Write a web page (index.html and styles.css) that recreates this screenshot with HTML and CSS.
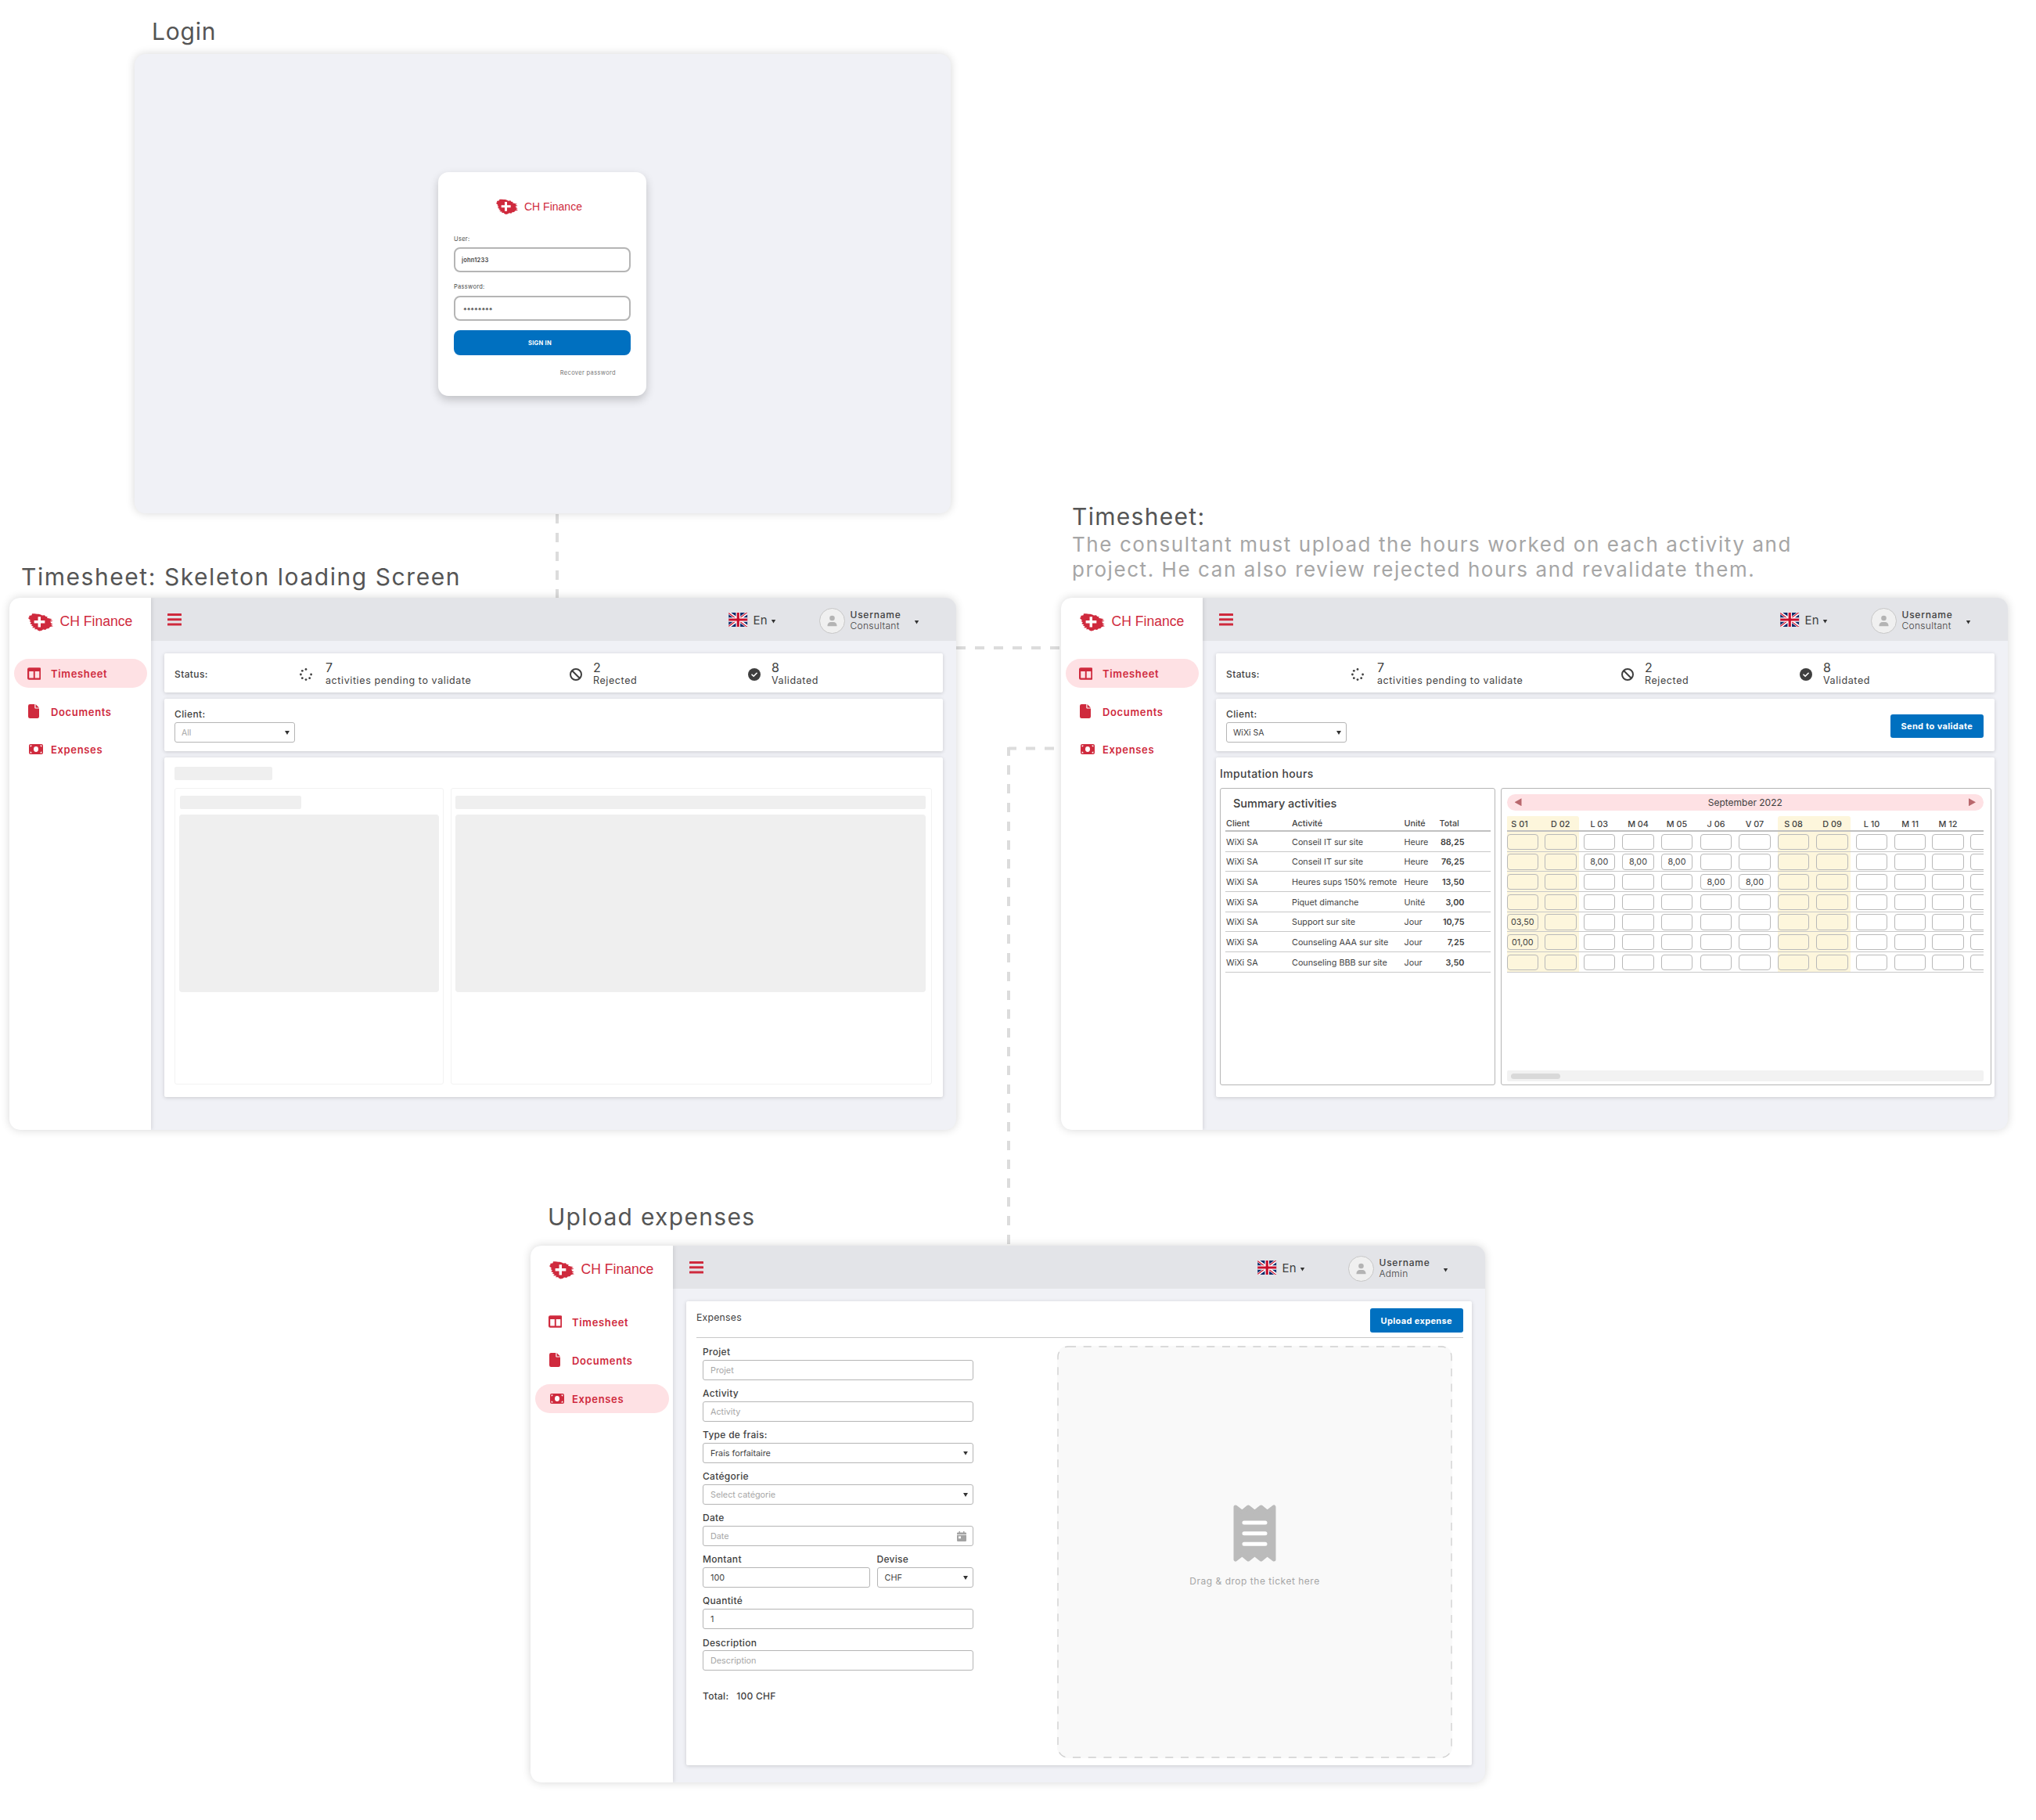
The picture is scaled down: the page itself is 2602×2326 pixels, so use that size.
FILE: index.html
```html
<!DOCTYPE html>
<html lang="en">

<head>
    <meta charset="UTF-8">
    <meta name="viewport" content="width=device-width, initial-scale=1.0">
    <title>CH Finance - Screens</title>
    <link rel="stylesheet" href="styles.css">
</head>

<body>

    <!-- Shared icons -->
    <svg class="sprite" aria-hidden="true">
        <symbol id="i-logo" viewBox="0 0 84 60">
            <path fill="#cf2a3d" d="M0 17l4-4-1-4 9-2 1-5 8 0 9 1 5 0 7 2 5 3 8-1 3 4 7 1-2 4 18 4-7 3 9 4-9 2 3 5 6 3-7 2 8 5-9 2-5 3 1 2-9 1-4 4-8-1-4 3-8 2-7-3-1-3-9 0 3-4-11-1 5-4-8-3 4-3-8-4 4-4-6-4 4-2z" />
            <path fill="#fff" d="M33 12h9v13h14v9H42v13h-9V34H20v-9h13z" />
        </symbol>
        <symbol id="i-table" viewBox="0 0 18 16">
            <path fill="#cf2a3d" fill-rule="evenodd" d="M2.200 0h13.600A2.200 2.200 0 0 1 18 2.200v11.600a2.200 2.200 0 0 1-2.200 2.200H2.200A2.200 2.200 0 0 1 0 13.800V2.200A2.200 2.200 0 0 1 2.200 0zM2.300 5v8.700H8V5zM10 5v8.700h5.700V5z" />
        </symbol>
        <symbol id="i-file" viewBox="0 0 14 18">
            <path fill="#cf2a3d" d="M2.200 0H8.300v4.300c0 .8.500 1.300 1.300 1.300H14v10.200A2.200 2.200 0 0 1 11.800 18H2.200A2.200 2.200 0 0 1 0 15.800V2.200A2.200 2.200 0 0 1 2.200 0zM9.500 0L14 4.500H9.500z" />
        </symbol>
        <symbol id="i-money" viewBox="0 0 18 13">
            <rect width="18" height="13" rx="2" fill="#cf2a3d" />
            <ellipse cx="9" cy="6.500" rx="3" ry="3.400" fill="#fff" />
            <path fill="#fff" d="M1.600 3.600V1.600h2a2 2 0 0 1-2 2zM16.400 3.600V1.600h-2a2 2 0 0 0 2 2zM1.600 9.400v2h2a2 2 0 0 0-2-2zM16.400 9.400v2h-2a2 2 0 0 1 2-2z" />
        </symbol>
        <symbol id="i-burger" viewBox="0 0 18 16">
            <g fill="#cf2a3d">
                <rect width="18" height="3" rx=".5" />
                <rect y="6.300" width="18" height="3" rx=".5" />
                <rect y="12.600" width="18" height="3" rx=".5" />
            </g>
        </symbol>
        <symbol id="i-flag" viewBox="0 0 24 18">
            <rect width="24" height="18" fill="#0b2a6b" />
            <path stroke="#fff" stroke-width="3.600" d="M0 0l24 18M24 0L0 18" />
            <path stroke="#cf1b36" stroke-width="1.200" d="M0 .6l24 18M24-.6L0 17.400" />
            <path stroke="#fff" stroke-width="5.600" d="M12 0v18M0 9h24" />
            <path stroke="#c8102e" stroke-width="3.200" d="M12 0v18M0 9h24" />
        </symbol>
        <symbol id="i-user" viewBox="0 0 33 33">
            <circle cx="16.500" cy="16.500" r="16" fill="#f0f0f0" stroke="#c6c6c6" />
            <circle cx="16.500" cy="13" r="3.300" fill="#b4b4b4" />
            <path fill="#b4b4b4" d="M10.500 23.300v-1a4.300 4.300 0 0 1 4.300-4.300h3.400a4.300 4.300 0 0 1 4.300 4.300v1z" />
        </symbol>
        <symbol id="i-spinner" viewBox="0 0 16 16">
            <g fill="#3f3f3f">
                <circle cx="8" cy="1.400" r="1.400" /><circle cx="8" cy="14.600" r="1.400" />
                <circle cx="1.400" cy="8" r="1.400" /><circle cx="14.600" cy="8" r="1.400" />
                <circle cx="3.300" cy="3.300" r="1.400" /><circle cx="3.300" cy="12.700" r="1.400" />
                <circle cx="12.700" cy="12.700" r="1.400" />
            </g>
        </symbol>
        <symbol id="i-ban" viewBox="0 0 16 16">
            <path fill="none" stroke="#3f3f3f" stroke-width="2" d="M3 3l10 10M8 1a7 7 0 1 0 0 14A7 7 0 1 0 8 1z" />
        </symbol>
        <symbol id="i-check" viewBox="0 0 16 16">
            <circle cx="8" cy="8" r="8" fill="#3f3f3f" />
            <path fill="none" stroke="#fff" stroke-width="1.600" stroke-linecap="round" stroke-linejoin="round" d="M5 8.200l2.100 2.100 4-4" />
        </symbol>
        <symbol id="i-calendar" viewBox="0 0 12 13">
            <path fill="#a3a3a3" fill-rule="evenodd" d="M2.500 0H4v1.500h4V0h1.500v1.500h1.300A1.200 1.200 0 0 1 12 2.700V4H0V2.700a1.200 1.200 0 0 1 1.200-1.200h1.300zM0 4.800h12v7A1.200 1.200 0 0 1 10.800 13H1.200A1.200 1.200 0 0 1 0 11.800zM2 6.500v2.800h3V6.500z" />
        </symbol>
        <symbol id="i-receipt" viewBox="0 0 55 73">
            <path fill="#bbb" stroke="#bbb" stroke-width="5" stroke-linejoin="round" d="M3 3l8.500 6.500L19.300 3l8.200 6.500L35.700 3l7.800 6.500L52 3v67l-8.500-6.500L35.700 70l-8.200-6.500L19.300 70l-7.800-6.500L3 70z" />
            <path stroke="#fff" stroke-width="5" stroke-linecap="round" d="M14 23h27M14 36.700h27M14 50.300h27" />
        </symbol>
    </svg>

    <!-- Flow lines between screens -->
    <svg class="flow" viewBox="0 0 2602 2326">
        <path d="M712 765V656M1354 828H1222M1347 956.500H1289M1289 1590V955" />
    </svg>

    <h2 class="title title-login">Login</h2>
    <section class="screen login">
        <form class="login-card">
            <div class="logo logo-small">
                <svg><use href="#i-logo" /></svg>
                <span>CH Finance</span>
            </div>
            <label class="login-label">User:</label>
            <input class="login-input" type="text" value="john1233">
            <label class="login-label second">Password:</label>
            <input class="login-input stars" type="text" value="********">
            <button class="sign-in" type="button">SIGN IN</button>
            <a class="recover">Recover password</a>
        </form>
    </section>

    <h2 class="title title-skeleton">Timesheet: Skeleton loading Screen</h2>
    <section class="screen app skeleton">
        <aside class="sidebar">
            <div class="logo"><svg><use href="#i-logo" /></svg><span>CH Finance</span></div>
            <nav>
                <a class="nav-item active"><svg class="ic-table"><use href="#i-table" /></svg><span>Timesheet</span></a>
                <a class="nav-item"><svg class="ic-file"><use href="#i-file" /></svg><span>Documents</span></a>
                <a class="nav-item"><svg class="ic-money"><use href="#i-money" /></svg><span>Expenses</span></a>
            </nav>
        </aside>
        <header class="topbar">
            <svg class="burger"><use href="#i-burger" /></svg>
            <div class="lang"><svg class="flag"><use href="#i-flag" /></svg><span>En</span><i class="caret"></i></div>
            <div class="user">
                <svg class="avatar"><use href="#i-user" /></svg>
                <div class="user-text"><b>Username</b><span>Consultant</span></div>
                <i class="caret"></i>
            </div>
        </header>
        <main class="content">
            <div class="card status">
                <span class="label">Status:</span>
                <div class="stat wide"><svg><use href="#i-spinner" /></svg><p><b>7</b><span>activities pending to validate</span></p></div>
                <div class="stat"><svg><use href="#i-ban" /></svg><p><b>2</b><span>Rejected</span></p></div>
                <div class="stat"><svg><use href="#i-check" /></svg><p><b>8</b><span>Validated</span></p></div>
            </div>
            <div class="card client">
                <div class="client-field">
                    <span class="label">Client:</span>
                    <div class="select empty"><span>All</span><i class="caret"></i></div>
                </div>
            </div>
            <div class="card loading">
                <div class="bone bone-title"></div>
                <div class="bone-panels">
                    <div class="bone-panel"><div class="bone bone-bar"></div><div class="bone bone-block"></div></div>
                    <div class="bone-panel"><div class="bone bone-bar"></div><div class="bone bone-block"></div></div>
                </div>
            </div>
        </main>
    </section>

    <div class="intro">
        <h2>Timesheet:</h2>
        <p>The consultant must upload the hours worked on each activity and<br>project. He can also review rejected hours and revalidate them.</p>
    </div>
    <section class="screen app timesheet">
        <aside class="sidebar">
            <div class="logo"><svg><use href="#i-logo" /></svg><span>CH Finance</span></div>
            <nav>
                <a class="nav-item active"><svg class="ic-table"><use href="#i-table" /></svg><span>Timesheet</span></a>
                <a class="nav-item"><svg class="ic-file"><use href="#i-file" /></svg><span>Documents</span></a>
                <a class="nav-item"><svg class="ic-money"><use href="#i-money" /></svg><span>Expenses</span></a>
            </nav>
        </aside>
        <header class="topbar">
            <svg class="burger"><use href="#i-burger" /></svg>
            <div class="lang"><svg class="flag"><use href="#i-flag" /></svg><span>En</span><i class="caret"></i></div>
            <div class="user">
                <svg class="avatar"><use href="#i-user" /></svg>
                <div class="user-text"><b>Username</b><span>Consultant</span></div>
                <i class="caret"></i>
            </div>
        </header>
        <main class="content">
            <div class="card status">
                <span class="label">Status:</span>
                <div class="stat wide"><svg><use href="#i-spinner" /></svg><p><b>7</b><span>activities pending to validate</span></p></div>
                <div class="stat"><svg><use href="#i-ban" /></svg><p><b>2</b><span>Rejected</span></p></div>
                <div class="stat"><svg><use href="#i-check" /></svg><p><b>8</b><span>Validated</span></p></div>
            </div>
            <div class="card client">
                <div class="client-field">
                    <span class="label">Client:</span>
                    <div class="select"><span>WiXi SA</span><i class="caret"></i></div>
                </div>
                <button class="btn" type="button">Send to validate</button>
            </div>
            <div class="card hours">
                <h3>Imputation hours</h3>
                <div class="panels">
                    <div class="panel summary">
                        <h4>Summary activities</h4>
                        <div class="row head"><span>Client</span><span>Activité</span><span>Unité</span><span>Total</span></div>
                        <div id="activities"></div>
                    </div>
                    <div class="panel calendar">
                        <div class="month"><i class="prev"></i><span>September 2022</span><i class="next"></i></div>
                        <div class="days" id="days"></div>
                        <div class="scrollbar"><div class="thumb"></div></div>
                    </div>
                </div>
            </div>
        </main>
    </section>

    <h2 class="title title-expenses">Upload expenses</h2>
    <section class="screen app expenses">
        <aside class="sidebar">
            <div class="logo"><svg><use href="#i-logo" /></svg><span>CH Finance</span></div>
            <nav>
                <a class="nav-item"><svg class="ic-table"><use href="#i-table" /></svg><span>Timesheet</span></a>
                <a class="nav-item"><svg class="ic-file"><use href="#i-file" /></svg><span>Documents</span></a>
                <a class="nav-item active"><svg class="ic-money"><use href="#i-money" /></svg><span>Expenses</span></a>
            </nav>
        </aside>
        <header class="topbar">
            <svg class="burger"><use href="#i-burger" /></svg>
            <div class="lang"><svg class="flag"><use href="#i-flag" /></svg><span>En</span><i class="caret"></i></div>
            <div class="user">
                <svg class="avatar"><use href="#i-user" /></svg>
                <div class="user-text"><b>Username</b><span>Admin</span></div>
                <i class="caret"></i>
            </div>
        </header>
        <main class="content">
            <div class="card expense-card">
                <div class="expense-head">
                    <span>Expenses</span>
                    <button class="btn" type="button">Upload expense</button>
                </div>
                <div class="expense-body">
                    <form class="expense-form">
                        <label>Projet</label>
                        <input type="text" placeholder="Projet">
                        <label>Activity</label>
                        <input type="text" placeholder="Activity">
                        <label>Type de frais:</label>
                        <div class="select"><span>Frais forfaitaire</span><i class="caret"></i></div>
                        <label>Catégorie</label>
                        <div class="select empty"><span>Select catégorie</span><i class="caret"></i></div>
                        <label>Date</label>
                        <div class="select date empty"><span>Date</span><svg><use href="#i-calendar" /></svg></div>
                        <div class="form-cols">
                            <div><label>Montant</label><input type="text" value="100"></div>
                            <div><label>Devise</label><div class="select"><span>CHF</span><i class="caret"></i></div></div>
                        </div>
                        <label>Quantité</label>
                        <input type="text" value="1">
                        <label>Description</label>
                        <input type="text" placeholder="Description">
                        <div class="total"><span>Total:</span><span>100 CHF</span></div>
                    </form>
                    <div class="dropzone">
                        <svg class="dash"><rect x="1" y="1" width="503" height="525" rx="13" /></svg>
                        <svg class="receipt"><use href="#i-receipt" /></svg>
                        <span>Drag &amp; drop the ticket here</span>
                    </div>
                </div>
            </div>
        </main>
    </section>

    <script>
        const activities = [
            ['Conseil IT sur site', 'Heure', '88,25', {}],
            ['Conseil IT sur site', 'Heure', '76,25', { 2: '8,00', 3: '8,00', 4: '8,00' }],
            ['Heures sups 150% remote', 'Heure', '13,50', { 5: '8,00', 6: '8,00' }],
            ['Piquet dimanche', 'Unité', '3,00', {}],
            ['Support sur site', 'Jour', '10,75', { 0: '03,50' }],
            ['Counseling AAA sur site', 'Jour', '7,25', { 0: '01,00' }],
            ['Counseling BBB sur site', 'Jour', '3,50', {}]
        ];
        const days = ['S 01', 'D 02', 'L 03', 'M 04', 'M 05', 'J 06', 'V 07', 'S 08', 'D 09', 'L 10', 'M 11', 'M 12', ''];

        // Summary table
        document.getElementById('activities').innerHTML = activities.map(a =>
            `<div class="row"><span>WiXi SA</span><span>${a[0]}</span><span>${a[1]}</span><b>${a[2]}</b></div>`
        ).join('');

        // Calendar grid: one header line and one line of cells per activity
        let html = '<div class="weekend first"></div><div class="weekend second"></div>';
        html += '<div class="day-row day-head">' + days.map(d => `<span>${d}</span>`).join('') + '</div>';
        activities.forEach(a => {
            html += '<div class="day-row">' + days.map((d, i) => `<span class="cell">${a[3][i] || ''}</span>`).join('') + '</div>';
        });
        document.getElementById('days').innerHTML = html;
    </script>

</body>

</html>
```

FILE: styles.css
```css
/* General Styles */
* {
    margin: 0;
    padding: 0;
    box-sizing: border-box;
}

body {
    position: relative;
    width: 2602px;
    height: 2326px;
    overflow: hidden;
    background-color: #fff;
    font-family: Inter, 'Liberation Sans', sans-serif;
    color: #3f3f3f;
}

input,
button {
    font-family: inherit;
    outline: none;
}

.sprite {
    display: none;
}

.flow {
    position: absolute;
    left: 0;
    top: 0;
    width: 2602px;
    height: 2326px;
    fill: none;
    stroke: #dcdcdc;
    stroke-width: 4;
    stroke-dasharray: 12 12;
}

/* Screen titles */
.title,
.intro {
    position: absolute;
    white-space: nowrap;
}

.title,
.intro h2 {
    font-size: 30px;
    line-height: 40px;
    font-weight: 400;
    letter-spacing: 1.3px;
    color: #555;
}

.title-login {
    left: 194px;
    top: 20px;
    letter-spacing: 0.8px;
}

.title-skeleton {
    left: 27px;
    top: 717px;
    letter-spacing: 1.550px;
}

.title-expenses {
    left: 700px;
    top: 1535px;
}

.intro {
    left: 1370px;
    top: 640px;
}

.intro p {
    font-size: 26px;
    line-height: 32.300px;
    letter-spacing: 1.570px;
    color: #a6a6a6;
}

/* Screens on the board */
.screen {
    position: absolute;
    border-radius: 14px;
    background-color: #f0f1f6;
    box-shadow: 0 0 12px rgba(0, 0, 0, 0.16);
    overflow: hidden;
}

.login {
    left: 172px;
    top: 69px;
    width: 1043px;
    height: 587px;
    padding: 151px 0 0 388px;
}

.skeleton {
    left: 12px;
    top: 764px;
}

.timesheet {
    left: 1356px;
    top: 764px;
}

.expenses {
    left: 678px;
    top: 1592px;
}

.app {
    width: 1210px;
    height: 680px;
    display: grid;
    grid-template-columns: 181px minmax(0, 1fr);
    grid-template-rows: 55px 1fr;
}

.app.expenses {
    width: 1220px;
    height: 686px;
    grid-template-columns: 182px minmax(0, 1fr);
}

/* Login */
.login-card {
    display: flex;
    flex-direction: column;
    width: 266px;
    height: 286px;
    padding: 34px 20px 0;
    border-radius: 13px;
    background-color: #fff;
    box-shadow: 0 5px 12px rgba(0, 0, 0, 0.2);
}

.login-label {
    font-size: 7.500px;
    line-height: 10px;
    margin-top: 26.500px;
    letter-spacing: 0.3px;
    color: #4a4a4a;
}

.login-label.second {
    margin-top: 14px;
}

.login-input {
    height: 32px;
    margin-top: 5.500px;
    padding-left: 8px;
    border: 2px solid #b5b5b5;
    border-radius: 8px;
    font-size: 7.500px;
    font-weight: 600;
    letter-spacing: 0.2px;
    color: #3f3f3f;
}

.login-input.stars {
    padding: 4px 0 0 10px;
    margin-top: 6px;
    font-size: 9px;
    font-weight: 500;
    letter-spacing: 0;
}

.sign-in {
    height: 32px;
    margin-top: 12px;
    padding-right: 6px;
    border: none;
    border-radius: 8px;
    background-color: #0070c0;
    font-size: 7.500px;
    font-weight: 700;
    letter-spacing: 0.3px;
    color: #fff;
}

.recover {
    align-self: flex-end;
    margin: 18px 19px 0 0;
    font-size: 7.500px;
    line-height: 10px;
    letter-spacing: 0.350px;
    color: #777;
}

/* Logo */
.logo {
    display: flex;
    align-items: center;
    height: 24px;
    font-family: 'Liberation Sans', Arial, sans-serif;
    font-size: 17.600px;
    color: #cf2a3d;
    white-space: nowrap;
}

.logo svg {
    width: 32px;
    height: 24px;
    margin-right: 9px;
}

.logo-small {
    height: 20px;
    margin-left: 54px;
    font-size: 14px;
}

.logo-small svg {
    width: 28px;
    height: 20px;
    margin-right: 8px;
}

/* Sidebar */
.sidebar {
    grid-row: 1 / 3;
    padding: 18.500px 5.500px 0;
    background-color: #fff;
    box-shadow: 1px 0 5px rgba(0, 0, 0, 0.12);
    z-index: 1;
}

.sidebar .logo {
    margin-left: 18px;
}

.sidebar nav {
    display: flex;
    flex-direction: column;
    gap: 11.700px;
    margin-top: 35.500px;
}

.expenses .sidebar nav {
    gap: 12.200px;
    margin-top: 36px;
}

.nav-item {
    display: flex;
    align-items: center;
    height: 37px;
    padding-left: 17px;
    border-radius: 19px;
    font-size: 13px;
    font-weight: 600;
    letter-spacing: 0.650px;
    color: #cf2a3d;
}

.nav-item.active {
    background-color: #fee1e4;
}

.nav-item span {
    margin-top: 1px;
}

.nav-item svg {
    flex: none;
}

.ic-table {
    width: 17.500px;
    height: 16px;
    margin-right: 13px;
}

.ic-file {
    width: 14px;
    height: 18px;
    margin: 0 15px 0 1.500px;
}

.ic-money {
    width: 18px;
    height: 13px;
    margin: 0 10.500px 0 2px;
}

/* Top bar */
.topbar {
    display: flex;
    align-items: center;
    padding: 1px 47.500px 0 21px;
    background-color: #e3e4e8;
}

.burger {
    width: 18px;
    height: 16px;
}

.caret {
    width: 6px;
    height: 5px;
    background-color: #333;
    clip-path: polygon(0 0, 100% 0, 50% 100%);
}

.lang {
    display: flex;
    align-items: center;
    margin-left: auto;
    margin-right: 55px;
    font-size: 15px;
}

.lang span {
    margin: 1px 5px 0 7px;
}

.flag {
    width: 24.500px;
    height: 18px;
}

.user {
    display: flex;
    align-items: center;
    margin-top: 2px;
}

.avatar {
    width: 33px;
    height: 33px;
}

.user-text {
    display: flex;
    flex-direction: column;
    width: 82px;
    margin-left: 7px;
    font-size: 12px;
    line-height: 14px;
}

.user-text b {
    font-weight: 500;
    letter-spacing: 0.750px;
}

.user-text span {
    font-weight: 300;
    letter-spacing: 0.3px;
}

.lang .caret,
.user .caret {
    margin-top: 4px;
}

/* Cards */
.content {
    display: flex;
    flex-direction: column;
    gap: 8px;
    padding: 16px 17px 0;
}

.card {
    background-color: #fff;
    border-radius: 2px;
    box-shadow: 0 1px 5px rgba(0, 0, 0, 0.16);
}

.label {
    font-size: 12px;
    font-weight: 500;
    letter-spacing: 0.380px;
}

.status {
    display: grid;
    grid-template-columns: 160px 345px 228px 1fr;
    align-items: center;
    height: 50px;
    padding: 3px 0 0 13px;
}

.stat {
    display: flex;
    align-items: center;
    gap: 14px;
}

.stat.wide {
    gap: 17px;
}

.stat svg {
    width: 16px;
    height: 16px;
}

.stat p {
    display: flex;
    flex-direction: column;
    font-size: 12.500px;
    line-height: 17px;
    letter-spacing: 0.6px;
}

.stat b {
    font-size: 16px;
    font-weight: 400;
    line-height: 16px;
}

.client {
    display: flex;
    justify-content: space-between;
    height: 67px;
    padding: 12px 14px 0 13px;
}

.client-field .label {
    display: block;
    line-height: 15px;
}

.client-field .select {
    width: 154px;
    margin-top: 3px;
}

.select {
    display: flex;
    align-items: center;
    justify-content: space-between;
    height: 26px;
    padding: 1px 6px 0 8px;
    border: 1px solid #b5b5b5;
    border-radius: 3px;
    font-size: 10.500px;
}

.select.empty {
    color: #a6a6a6;
}

.btn {
    width: 119.500px;
    height: 30px;
    border: none;
    border-radius: 3px;
    background-color: #0070c0;
    font-size: 11px;
    font-weight: 700;
    letter-spacing: 0.350px;
    color: #fff;
}

.client .btn {
    margin-top: 8px;
}

/* Skeleton */
.loading {
    height: 434px;
    padding: 12px 13px;
}

.bone {
    border-radius: 2px;
    background-color: #efefef;
}

.bone-title {
    width: 125px;
    height: 17px;
}

.bone-panels {
    display: grid;
    grid-template-columns: 344px 615px;
    gap: 8.500px;
    margin-top: 10px;
}

.bone-panel {
    height: 379px;
    padding: 9px 5px;
    border: 1px solid #f2f2f2;
    border-radius: 3px;
}

.bone-panel + .bone-panel {
    padding-right: 7px;
}

.bone-bar {
    width: 155px;
    height: 17px;
    margin-left: 1px;
}

.bone-panel + .bone-panel .bone-bar {
    width: auto;
    margin-left: 0;
}

.bone-block {
    height: 227px;
    margin-top: 7px;
    border-radius: 4px;
}

/* Imputation hours */
.hours {
    height: 434px;
    padding: 11px 4px 0 5px;
}

.hours h3 {
    font-size: 14px;
    line-height: 19px;
    font-weight: 500;
    letter-spacing: 0.4px;
}

.panels {
    display: grid;
    grid-template-columns: 352px minmax(0, 1fr);
    gap: 6.500px;
    margin-top: 9px;
}

.panel {
    height: 380px;
    border: 1px solid #b5b5b5;
    border-radius: 3px;
}

.summary {
    padding: 8px 6px 0;
}

.summary h4 {
    padding-left: 10px;
    font-size: 14.500px;
    line-height: 21px;
    font-weight: 500;
}

.row {
    display: grid;
    grid-template-columns: 84px 143.500px 45px 32px;
    width: 339px;
    height: 25.700px;
    padding: 5.500px 0 0 1px;
    border-bottom: 1px solid #c8c8c8;
    font-size: 10.800px;
    line-height: 16px;
    white-space: nowrap;
}

.row.head {
    border-bottom: 2px solid #c0c0c0;
    font-weight: 500;
    height: 26px;
    padding-top: 8px;
}

.row b {
    text-align: right;
    font-weight: 600;
}

.calendar {
    display: flex;
    flex-direction: column;
    padding: 6.500px 9px 4px 7px;
}

.month {
    display: flex;
    align-items: center;
    justify-content: space-between;
    height: 21.500px;
    padding: 0 10px;
    border-radius: 11px;
    background-color: #fee1e4;
    font-size: 12px;
}

.prev,
.next {
    width: 9px;
    height: 10px;
    background-color: #b9686d;
    clip-path: polygon(0 50%, 100% 0, 100% 100%);
}

.next {
    clip-path: polygon(0 0, 100% 50%, 0 100%);
}

.days {
    position: relative;
    margin-top: 7px;
    overflow: hidden;
}

/* Weekend tint behind the cells */
.weekend {
    position: absolute;
    top: 0;
    bottom: 0;
    width: 93px;
    border-radius: 3px 3px 0 0;
    background-color: #fdf6dc;
}

.weekend.first {
    left: -1px;
}

.weekend.second {
    left: 346px;
}

.day-row {
    position: relative;
    display: grid;
    grid-template-columns: 48.500px 49.500px 49.800px 49.500px 50px 49.500px 49.500px 49.500px 50.500px 49px 48.500px 48.700px 41px;
    height: 25.700px;
    padding-top: 2.500px;
    border-bottom: 1px solid #c8c8c8;
}

.day-head {
    height: 20px;
    padding-top: 4px;
    border-bottom: 2px solid #c0c0c0;
}

.day-head span {
    width: 40.500px;
    font-size: 10.800px;
    line-height: 14px;
    font-weight: 500;
    text-align: center;
}

.day-head span:first-child {
    width: 33px;
}

.cell {
    width: 40.500px;
    height: 20.500px;
    border: 1px solid #b9b9b9;
    border-radius: 4px;
    font-size: 10.800px;
    line-height: 19px;
    text-align: center;
}

.scrollbar {
    height: 14px;
    margin-top: auto;
    padding: 3.500px 5px;
    border-radius: 2px;
    background-color: #f2f2f2;
}

.thumb {
    width: 63px;
    height: 7px;
    border-radius: 4px;
    background-color: #d9d9d9;
}

/* Upload expenses */
.expense-card {
    height: 593px;
    padding: 9px 11px 0 13px;
}

.expense-head {
    display: flex;
    justify-content: space-between;
    height: 38px;
    border-bottom: 1px solid #c8c8c8;
}

.expense-head span {
    padding-top: 3.500px;
    font-size: 12.300px;
    line-height: 16px;
    letter-spacing: 0.2px;
}

.expense-head .btn {
    height: 31px;
}

.expense-body {
    display: flex;
    justify-content: space-between;
    padding: 10px 14px 0 8px;
}

.expense-form {
    width: 346px;
}

.expense-form label {
    display: block;
    font-size: 12px;
    line-height: 15px;
    font-weight: 500;
    letter-spacing: 0.3px;
    margin-bottom: 2.700px;
}

.expense-form input,
.expense-form .select {
    width: 100%;
    height: 26px;
    margin-bottom: 9.400px;
    padding: 1px 6px 0 9px;
    border: 1px solid #b5b5b5;
    border-radius: 3px;
    font-size: 10.800px;
    color: #3f3f3f;
}

.expense-form input {
    display: block;
}

.expense-form .select.empty,
.expense-form input::placeholder {
    color: #a6a6a6;
}

.date svg {
    width: 12px;
    height: 13px;
    margin-right: 2px;
}

.form-cols {
    display: grid;
    grid-template-columns: 214px 123.500px;
    gap: 8.500px;
}

.total {
    display: flex;
    gap: 10px;
    margin-top: 24.500px;
    font-size: 12px;
    line-height: 16px;
    font-weight: 500;
    letter-spacing: 0.250px;
}

.dropzone {
    position: relative;
    display: flex;
    flex-direction: column;
    align-items: center;
    width: 505px;
    height: 527px;
    padding-top: 203px;
    border-radius: 14px;
    background-color: #f9f9f9;
    font-size: 12px;
    letter-spacing: 0.520px;
    color: #a6a6a6;
}

.dash {
    position: absolute;
    left: 0;
    top: 0;
    width: 505px;
    height: 527px;
    fill: none;
    stroke: #cfcfcf;
    stroke-width: 1.300;
    stroke-dasharray: 10 9.700;
}

.receipt {
    width: 55px;
    height: 73px;
    margin-bottom: 17px;
}
```
